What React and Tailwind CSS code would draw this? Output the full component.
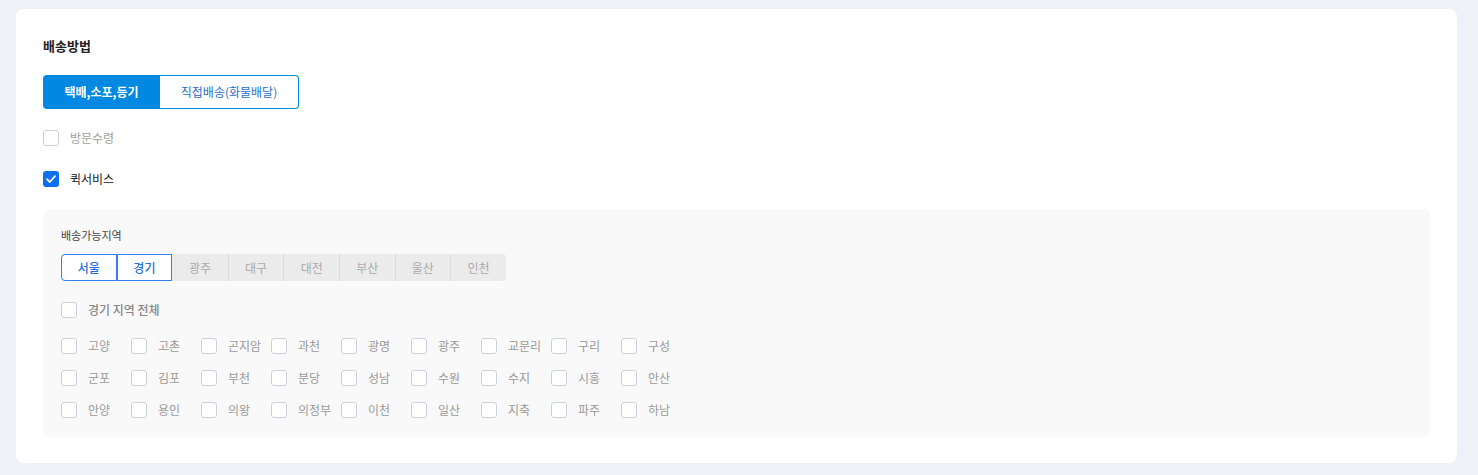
import React from 'react';

const font = { fontFamily: '"Noto Sans CJK KR", "Noto Sans", sans-serif' };

const regions = ['서울', '경기', '광주', '대구', '대전', '부산', '울산', '인천'];
const areas = [
  '고양', '고촌', '곤지암', '과천', '광명', '광주', '교문리', '구리', '구성',
  '군포', '김포', '부천', '분당', '성남', '수원', '수지', '시흥', '안산',
  '안양', '용인', '의왕', '의정부', '이천', '일산', '지축', '파주', '하남',
];

const Box = ({ checked }) =>
  checked ? (
    <span className="w-4 h-4 rounded-[3px] bg-[#0b6ff0] flex items-center justify-center shrink-0">
      <svg width="12" height="12" viewBox="0 0 12 12" fill="none">
        <path d="M2 6.2 4.8 9 10 3.2" stroke="#fff" strokeWidth="1.8" strokeLinecap="round" strokeLinejoin="round" />
      </svg>
    </span>
  ) : (
    <span className="w-4 h-4 rounded-[3px] border border-[#c9d1de] bg-white shrink-0" />
  );

export default function App() {
  const [tabs] = React.useState(['서울', '경기']);

  return (
    <div className="w-[1478px] h-[475px] bg-[#eef1f8] pt-[9px] pl-4" style={font}>
      <div className="w-[1441px] h-[454px] bg-white rounded-lg pt-[27px] px-[27px]">
        <h2 className="text-[13px] font-bold text-[#222] leading-[20px]">배송방법</h2>

        <div className="flex mt-[19px] w-[256px] h-[34px] text-[12px]">
          <button className="w-[117px] bg-[#0088e2] text-white font-bold rounded-l-[4px]">택배,소포,등기</button>
          <button className="flex-1 border border-[#0088e2] border-l-0 text-[#2670c8] rounded-r-[4px] bg-white">직접배송(화물배달)</button>
        </div>

        <label className="flex items-center gap-[11px] mt-[21px] h-4">
          <Box />
          <span className="text-[12px] text-[#a0a0a0]">방문수령</span>
        </label>

        <label className="flex items-center gap-[11px] mt-[25px] h-4">
          <Box checked />
          <span className="text-[12px] text-[#222]">퀵서비스</span>
        </label>

        <div className="mt-[22px] w-[1387px] h-[228px] bg-[#f9f9f9] rounded-md pt-[18px] px-[18px]">
          <div className="text-[11px] text-[#444] leading-[16px]">배송가능지역</div>

          <div className="flex mt-[11px] h-[27px] w-[445px] bg-[#ebebeb] rounded-[4px] text-[12px]">
            {regions.map((r, i) => {
              const on = tabs.includes(r);
              return (
                <div
                  key={r}
                  className={
                    on
                      ? 'w-[55.6px] flex items-center justify-center bg-white border border-[#2f80f0] text-[#1f6fe0] font-medium ' +
                        (i === 0 ? 'rounded-l-[4px]' : '')
                      : 'w-[55.6px] flex items-center justify-center text-[#aaa] ' +
                        (i > 2 ? 'border-l border-[#dcdcdc] ' : '') +
                        (i === regions.length - 1 ? 'rounded-r-[4px]' : '')
                  }
                >
                  {r}
                </div>
              );
            })}
          </div>

          <label className="flex items-center gap-[11px] mt-[21px] h-4">
            <Box />
            <span className="text-[12px] text-[#888] font-medium">경기 지역 전체</span>
          </label>

          <div className="grid grid-cols-[repeat(9,70px)] gap-y-4 mt-[20px]">
            {areas.map((a, i) => (
              <label key={i} className="flex items-center gap-[11px] h-4">
                <Box />
                <span className="text-[12px] text-[#999] whitespace-nowrap">{a}</span>
              </label>
            ))}
          </div>
        </div>
      </div>
    </div>
  );
}
